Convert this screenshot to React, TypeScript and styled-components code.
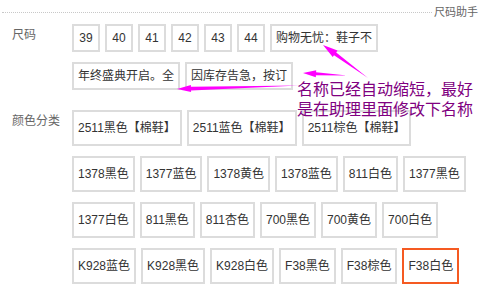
import React from "react";
import styled, { createGlobalStyle } from "styled-components";

const Global = createGlobalStyle`
  html, body { margin: 0; padding: 0; background: #fff; }
  body { font-family: "Liberation Sans", "Noto Sans CJK SC", sans-serif; font-size: 12px; color: #333; overflow: hidden; }
`;

const Page = styled.div`
  position: relative;
  width: 486px;
  height: 294px;
  overflow: hidden;
`;

const CutRow = styled.div`
  display: flex;
  margin-top: -14px;
  height: 17px;
  line-height: 17px;
`;

const CutLabel = styled.div`
  width: 60px;
  padding-left: 12px;
  color: #666;
`;

const CutText = styled.div`
  color: #555;
`;

const HelpRow = styled.div`
  display: flex;
  align-items: center;
  height: 14px;
  margin-top: 2px;
  padding: 0 8px 0 2px;
`;

const Dots = styled.div`
  flex: 1;
  border-top: 1px dotted #c8c8c8;
  margin-top: 1px;
`;

const HelpLink = styled.span`
  font-size: 11px;
  line-height: 14px;
  color: #666;
  margin-left: 2px;
`;

const Section = styled.div<{ $top: number }>`
  display: flex;
  margin-top: ${(p) => p.$top}px;
`;

const Label = styled.div`
  width: 60px;
  padding-left: 12px;
  padding-top: 1px;
  line-height: 20px;
  color: #666;
  flex-shrink: 0;
`;

const Options = styled.div`
  display: flex;
  flex-wrap: wrap;
  gap: 10px 5px;
  width: 406px;
  align-content: flex-start;
`;

const Opt = styled.div<{ $tall?: boolean; $selected?: boolean }>`
  box-sizing: border-box;
  height: ${(p) => (p.$tall ? 36 : 28)}px;
  line-height: ${(p) => (p.$tall ? 32 : 24)}px;
  padding: 0 4px;
  min-width: 28px;
  text-align: center;
  border: 2px solid ${(p) => (p.$selected ? "#f55a22" : "#dcdcdc")};
  color: #333;
  white-space: nowrap;
`;

const Note = styled.div`
  position: absolute;
  left: 297px;
  top: 78px;
  font-family: "Noto Sans CJK SC", sans-serif;
  font-size: 16px;
  line-height: 20px;
  color: #800080;
  white-space: nowrap;
`;

const Overlay = styled.svg`
  position: absolute;
  left: 0;
  top: 0;
  pointer-events: none;
`;

type Pt = [number, number];

function arrowPoints(tip: Pt, tail: Pt, headLen: number, headHalf: number, shaftHalf: number) {
  const dx = tail[0] - tip[0];
  const dy = tail[1] - tip[1];
  const len = Math.hypot(dx, dy);
  const ux = dx / len;
  const uy = dy / len;
  const nx = -uy;
  const ny = ux;
  const bx = tip[0] + ux * headLen;
  const by = tip[1] + uy * headLen;
  const pts: Pt[] = [
    tip,
    [bx + nx * headHalf, by + ny * headHalf],
    [bx + nx * shaftHalf, by + ny * shaftHalf],
    tail,
    [bx - nx * shaftHalf, by - ny * shaftHalf],
    [bx - nx * headHalf, by - ny * headHalf],
  ];
  return pts.map((p) => `${p[0].toFixed(1)},${p[1].toFixed(1)}`).join(" ");
}

const sizes = ["39", "40", "41", "42", "43", "44", "购物无忧：鞋子不", "年终盛典开启。全", "因库存告急，按订"];
const colors = [
  "2511黑色【棉鞋】",
  "2511蓝色【棉鞋】",
  "2511棕色【棉鞋】",
  "1378黑色",
  "1377蓝色",
  "1378黄色",
  "1378蓝色",
  "811白色",
  "1377黑色",
  "1377白色",
  "811黑色",
  "811杏色",
  "700黑色",
  "700黄色",
  "700白色",
  "K928蓝色",
  "K928黑色",
  "K928白色",
  "F38黑色",
  "F38棕色",
  "F38白色",
];

export default function App() {
  return (
    <>
      <Global />
      <Page>
        <CutRow>
          <CutLabel>配送</CutLabel>
          <CutText>浙江温州 至 北京 快递：0.00 卖家承担运费</CutText>
        </CutRow>
        <HelpRow>
          <Dots />
          <HelpLink>尺码助手</HelpLink>
        </HelpRow>
        <Section $top={5}>
          <Label>尺码</Label>
          <Options>
            {sizes.map((s) => (
              <Opt key={s}>{s}</Opt>
            ))}
          </Options>
        </Section>
        <Section $top={20}>
          <Label>颜色分类</Label>
          <Options>
            {colors.map((c) => (
              <Opt key={c} $tall $selected={c === "F38白色"}>
                {c}
              </Opt>
            ))}
          </Options>
        </Section>
        <Note>
          名称已经自动缩短，最好
          <br />
          是在助理里面修改下名称
        </Note>
        <Overlay width={486} height={294} viewBox="0 0 486 294">
          <polygon fill="#f0f" points={arrowPoints([323, 45], [368, 78], 15, 4, 1.8)} />
          <polygon fill="#f0f" points={arrowPoints([303, 73], [347, 75.5], 13, 3.5, 1.5)} />
          <polygon fill="#f0f" points={arrowPoints([177, 89], [299, 85.5], 14, 3.5, 1.8)} />
        </Overlay>
      </Page>
    </>
  );
}
